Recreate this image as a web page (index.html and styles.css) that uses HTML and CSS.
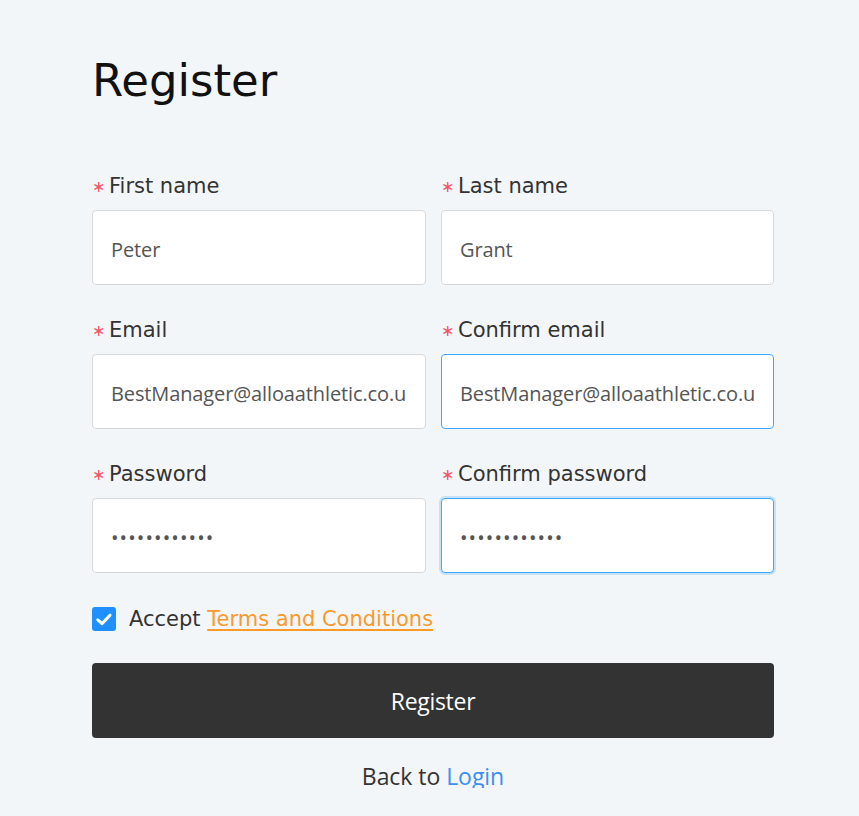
FILE: index.html
```html
<!DOCTYPE html>
<html lang="en">
<head>
<meta charset="utf-8">
<title>Register</title>
<link rel="stylesheet" href="styles.css">
</head>
<body>
<main class="page">
  <h1 class="title">Register</h1>
  <form class="form">
    <div class="fields">
      <div class="field">
        <label class="label"><span class="req">&#8727;</span>First name</label>
        <input class="input" type="text" value="Peter">
      </div>
      <div class="field">
        <label class="label"><span class="req">&#8727;</span>Last name</label>
        <input class="input" type="text" value="Grant">
      </div>
      <div class="field">
        <label class="label"><span class="req">&#8727;</span>Email</label>
        <input class="input" type="text" value="BestManager@alloaathletic.co.uk">
      </div>
      <div class="field">
        <label class="label"><span class="req">&#8727;</span>Confirm email</label>
        <input class="input input-hover" type="text" value="BestManager@alloaathletic.co.uk">
      </div>
      <div class="field">
        <label class="label"><span class="req">&#8727;</span>Password</label>
        <input class="input input-pass" type="password" value="passwordabcd">
      </div>
      <div class="field">
        <label class="label"><span class="req">&#8727;</span>Confirm password</label>
        <input class="input input-pass input-focus" type="password" value="passwordabcd">
      </div>
    </div>
    <div class="accept">
      <span class="checkbox">
        <svg width="24" height="24" viewBox="0 0 24 24"><path d="M5.8 12.8 L10 16.6 L18 8.2" fill="none" stroke="#fff" stroke-width="3" stroke-linecap="round" stroke-linejoin="round"/></svg>
      </span>
      <span class="accept-text">Accept <a class="terms" href="#">Terms and Conditions</a></span>
    </div>
    <button class="submit" type="button">Register</button>
    <p class="back">Back to <a class="login" href="#">Login</a></p>
  </form>
</main>
</body>
</html>
```

FILE: styles.css
```css
html, body {
  margin: 0;
  padding: 0;
  background: #f3f6f8;
}
body {
  font-family: "DejaVu Sans", sans-serif;
  color: #333;
}
.page {
  width: 682px;
  padding: 54px 0 0 92px;
}
.title {
  margin: 0;
  font-size: 45px;
  line-height: 53px;
  font-weight: normal;
  color: #111;
}
.form {
  margin-top: 67px;
}
.fields {
  display: grid;
  grid-template-columns: 334px 333px;
  column-gap: 15px;
  row-gap: 33px;
}
.field {
  display: flex;
  flex-direction: column;
  gap: 12px;
}
.label {
  font-size: 21px;
  line-height: 24px;
  color: #333;
  display: flex;
  align-items: center;
}
.req {
  color: #f25468;
  font-size: 16px;
  width: 17px;
  position: relative;
  top: 1px;
}
.input {
  box-sizing: border-box;
  width: 100%;
  height: 75px;
  margin: 0;
  border: 1px solid #d9d9d9;
  border-radius: 4px;
  padding: 4px 19px 0 18px;
  background: #fff;
  font-family: "Open Sans", sans-serif;
  font-size: 20px;
  letter-spacing: -0.12px;
  color: #555;
  outline: none;
}
.input-pass {
  letter-spacing: 1.1px;
}
.input-hover {
  border-color: #40a9ff;
}
.input-focus {
  border-color: #40a9ff;
  box-shadow: 0 0 0 2px rgba(24, 144, 255, 0.2);
}
.accept {
  margin-top: 34px;
  display: flex;
  align-items: center;
  gap: 13px;
  height: 24px;
}
.checkbox {
  width: 24px;
  height: 24px;
  border-radius: 3px;
  background: #1e90ff;
  display: flex;
}
.accept-text {
  font-size: 21px;
  line-height: 24px;
  color: #333;
}
.terms {
  color: #fa9a2e;
  text-decoration: underline;
  text-underline-offset: 3px;
}
.submit {
  display: block;
  width: 100%;
  height: 75px;
  margin-top: 32px;
  border: none;
  border-radius: 4px;
  background: #333;
  color: #fff;
  font-family: "Open Sans", sans-serif;
  font-size: 23px;
  letter-spacing: -0.3px;
  cursor: pointer;
}
.back {
  margin: 26px 0 0;
  text-align: center;
  font-family: "Open Sans", sans-serif;
  font-size: 23px;
  letter-spacing: -0.05px;
  line-height: 24px;
  color: #333;
}
.login {
  color: #3d8ef0;
  text-decoration: none;
}
```
